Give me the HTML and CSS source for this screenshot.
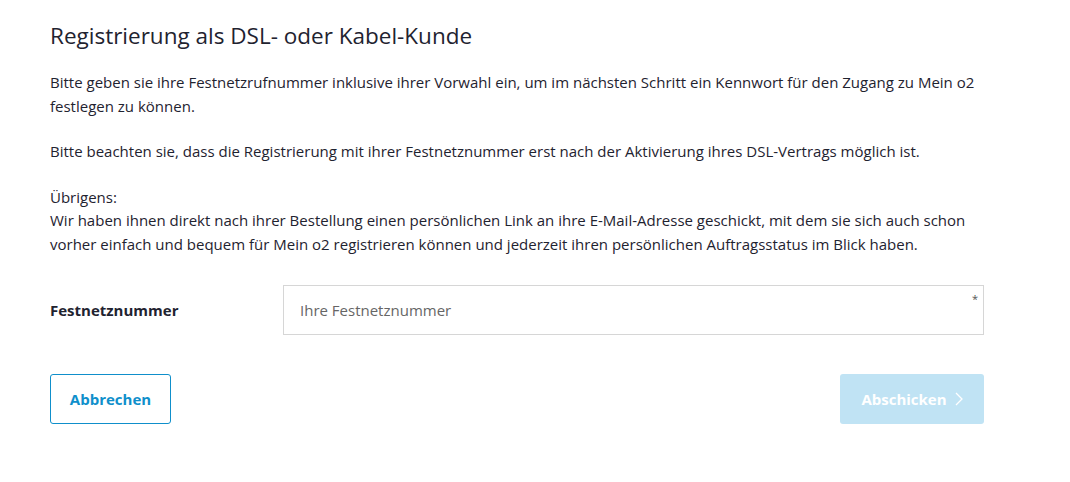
FILE: index.html
```html
<!DOCTYPE html>
<html lang="de">
<head>
<meta charset="utf-8">
<title>Registrierung</title>
<link rel="stylesheet" href="styles.css">
</head>
<body>
<main class="page">
  <h1 class="title">Registrierung als DSL- oder Kabel-Kunde</h1>
  <p class="text">Bitte geben sie ihre Festnetzrufnummer inklusive ihrer Vorwahl ein, um im nächsten Schritt ein Kennwort für den Zugang zu Mein o2 festlegen zu können.</p>
  <p class="text">Bitte beachten sie, dass die Registrierung mit ihrer Festnetznummer erst nach der Aktivierung ihres DSL-Vertrags möglich ist.</p>
  <p class="text">Übrigens:<br>Wir haben ihnen direkt nach ihrer Bestellung einen persönlichen Link an ihre E-Mail-Adresse geschickt, mit dem sie sich auch schon vorher einfach und bequem für Mein o2 registrieren können und jederzeit ihren persönlichen Auftragsstatus im Blick haben.</p>
  <div class="field">
    <label class="label" for="nr">Festnetznummer</label>
    <div class="input-wrap">
      <input class="input" id="nr" type="text" placeholder="Ihre Festnetznummer">
      <span class="req">*</span>
    </div>
  </div>
  <div class="actions">
    <button class="btn btn-outline" type="button">Abbrechen</button>
    <button class="btn btn-primary" type="button">Abschicken <svg class="chev" width="8" height="14" viewBox="0 0 8 14"><path d="M1 1l6 6-6 6" fill="none" stroke="#fff" stroke-width="1.3"/></svg></button>
  </div>
</main>
</body>
</html>
```
FILE: styles.css
```css
html, body {
  margin: 0;
  padding: 0;
  background: #fff;
}
body {
  font-family: "Open Sans", "Noto Sans", sans-serif;
  color: #1f2330;
}
.page {
  width: 934px;
  padding: 18px 0 0 50px;
}
.title {
  margin: 0 0 17px;
  font-size: 22.5px;
  font-weight: 400;
  line-height: 36px;
  color: #1f2330;
}
.text {
  margin: 0 0 22px;
  font-size: 15px;
  line-height: 23.5px;
}
.field {
  display: flex;
  align-items: center;
  margin-top: 29px;
}
.label {
  width: 233px;
  font-size: 15px;
  font-weight: 700;
}
.input-wrap {
  position: relative;
  flex: 1;
}
.input {
  box-sizing: border-box;
  width: 100%;
  height: 50px;
  border: 1px solid #d6d6d6;
  padding: 0 16px;
  font-family: inherit;
  font-size: 15px;
  color: #1f2330;
  outline: none;
}
.input::placeholder {
  color: #666;
}
.req {
  position: absolute;
  top: 6px;
  right: 6px;
  font-size: 11px;
  color: #555;
}
.actions {
  display: flex;
  justify-content: space-between;
  margin-top: 39px;
}
.btn {
  box-sizing: border-box;
  height: 50px;
  border-radius: 3px;
  font-family: inherit;
  font-size: 15px;
  font-weight: 700;
  cursor: pointer;
}
.btn-outline {
  width: 121px;
  background: #fff;
  border: 1px solid #0f8fcb;
  color: #0f8fcb;
}
.btn-primary {
  width: 144px;
  background: #c0e3f4;
  border: none;
  color: #fff;
  display: flex;
  align-items: center;
  justify-content: center;
  gap: 8px;
}
```
